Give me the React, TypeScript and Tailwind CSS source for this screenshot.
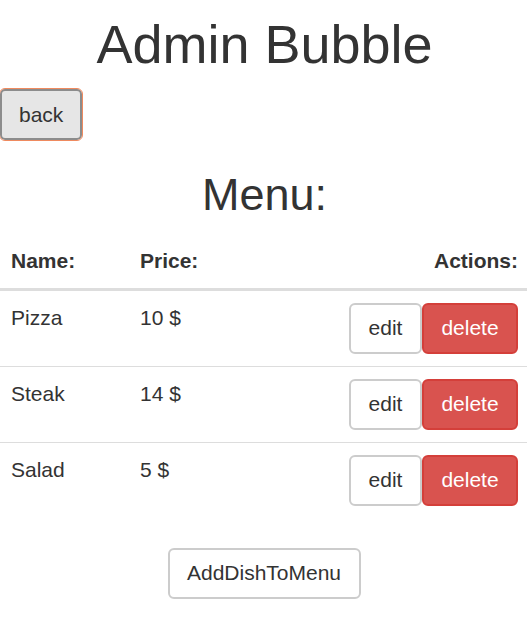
import React from "react";

const dishes = [
  { name: "Pizza", price: "10 $" },
  { name: "Steak", price: "14 $" },
  { name: "Salad", price: "5 $" },
];

export default function App() {
  return (
    <div
      className="w-[527px] bg-white text-[#333] text-[21px] leading-[30px]"
      style={{ fontFamily: '"Liberation Sans", Arial, sans-serif' }}
    >
      <h1 className="pt-[15px] pl-[2px] mb-[15px] text-center text-[54px] leading-[1.1] font-normal">
        Admin Bubble
      </h1>
      <div className="h-[51px] flex">
        <button className="h-[51px] w-[82px] px-[17px] bg-[#e6e6e6] border-2 border-[#8c8c8c] rounded-[5px] text-[21px] text-[#333] outline outline-1 outline-[#ef8a5f] leading-[30px]">
          back
        </button>
      </div>
      <h2 className="mt-[30px] pl-[2px] mb-[15px] text-center text-[45px] leading-[1.1] font-normal">
        Menu:
      </h2>
      <div className="w-full">
        <div className="grid grid-cols-[129px_1fr_auto] border-b-[3px] border-[#ddd] font-bold">
          <div className="pl-[11px] pt-[11px] pb-[12px]">Name:</div>
          <div className="pl-[11px] pt-[11px] pb-[12px]">Price:</div>
          <div className="pr-[9px] pt-[11px] pb-[12px] text-right">Actions:</div>
        </div>
        {dishes.map((d, i) => (
          <div
            key={d.name}
            className={
              "grid grid-cols-[129px_1fr_auto] " +
              (i > 0 ? "border-t border-[#ddd]" : "")
            }
          >
            <div className="pl-[11px] py-[12px]">{d.name}</div>
            <div className="pl-[11px] py-[12px]">{d.price}</div>
            <div className="pr-[9px] py-[12px] flex">
              <button className="h-[51px] w-[73px] bg-white border-2 border-[#ccc] rounded-[6px] text-[21px] text-[#333] leading-[30px]">
                edit
              </button>
              <button className="h-[51px] w-[96px] bg-[#d9534f] border-2 border-[#d43f3a] rounded-[6px] text-[21px] text-white leading-[30px]">
                delete
              </button>
            </div>
          </div>
        ))}
      </div>
      <div className="mt-[30px] flex justify-center pl-[1px]">
        <button className="h-[51px] w-[193px] bg-white border-2 border-[#ccc] rounded-[6px] text-[21px] text-[#333] leading-[30px]">
          AddDishToMenu
        </button>
      </div>
    </div>
  );
}
